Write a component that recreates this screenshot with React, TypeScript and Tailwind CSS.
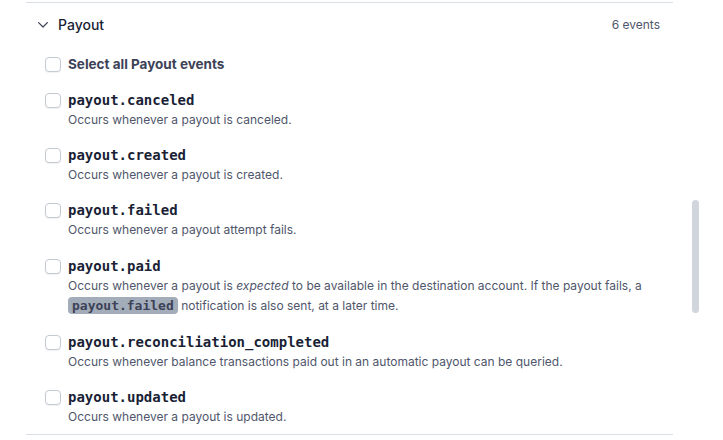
import { useState } from 'react';

type PayoutEvent = {
  name: string;
  description: React.ReactNode;
  tall?: boolean;
};

const EVENTS: PayoutEvent[] = [
  { name: 'payout.canceled', description: 'Occurs whenever a payout is canceled.' },
  { name: 'payout.created', description: 'Occurs whenever a payout is created.' },
  { name: 'payout.failed', description: 'Occurs whenever a payout attempt fails.' },
  {
    name: 'payout.paid',
    tall: true,
    description: (
      <>
        Occurs whenever a payout is <em>expected</em> to be available in the destination account. If the payout fails, a{' '}
        <code className="rounded-[4px] bg-[#a3acb9] px-[4px] py-[1px] font-['DejaVu_Sans_Mono',monospace] text-[13px] font-bold leading-[16px] text-[#3c4257]">
          payout.failed
        </code>{' '}
        notification is also sent, at a later time.
      </>
    ),
  },
  {
    name: 'payout.reconciliation_completed',
    description: 'Occurs whenever balance transactions paid out in an automatic payout can be queried.',
  },
  { name: 'payout.updated', description: 'Occurs whenever a payout is updated.' },
];

function Checkbox({ checked, onChange }: { checked: boolean; onChange: () => void }) {
  return (
    <button
      onClick={onChange}
      className={`mt-[2px] h-[15px] w-[16px] shrink-0 rounded-[4px] border shadow-[0_1px_1px_rgba(0,0,0,0.06)] ${
        checked ? 'border-[#635bff] bg-[#635bff]' : 'border-[#c4cad3] bg-white'
      }`}
    />
  );
}

export default function App() {
  const [selected, setSelected] = useState<Record<string, boolean>>({});
  const allSelected = EVENTS.every((e) => selected[e.name]);

  const toggle = (name: string) => setSelected((s) => ({ ...s, [name]: !s[name] }));
  const toggleAll = () => {
    const next: Record<string, boolean> = {};
    EVENTS.forEach((e) => (next[e.name] = !allSelected));
    setSelected(next);
  };

  return (
    <div className="flex h-[440px] w-[723px] overflow-hidden bg-white pt-[2px] font-['Inter',sans-serif]">
      <div className="ml-[26px] w-[647px] shrink-0">
        <div className="border-y border-[#d8dee4]">
          {/* Header */}
          <div className="flex h-[43px] items-center justify-between pl-[12px] pr-[13px]">
            <div className="flex items-center gap-[10px]">
              <svg width="10" height="6" viewBox="0 0 10 6" fill="none" className="mt-[1px]">
                <path d="M0.6 0.6 5 5 9.4 0.6" stroke="#3c4257" strokeWidth="1.2" strokeLinecap="round" strokeLinejoin="round" />
              </svg>
              <span className="text-[14px] font-medium text-[#1a1f36]">Payout</span>
            </div>
            <span className="text-[12px] text-[#4f566b]">6 events</span>
          </div>

          {/* Event list */}
          <div className="flex flex-col gap-[17px] pb-[8px] pl-[19px] pr-[20px] pt-[9px]">
            <label className="flex items-start gap-[7px]">
              <Checkbox checked={allSelected} onChange={toggleAll} />
              <span className="text-[13.5px] font-bold leading-[19px] text-[#3c4257]">Select all Payout events</span>
            </label>

            {EVENTS.map((event) => (
              <div key={event.name} className={`flex items-start gap-[7px] ${event.tall ? 'mt-[1px]' : ''}`}>
                <Checkbox checked={!!selected[event.name]} onChange={() => toggle(event.name)} />
                <div className="flex flex-col">
                  <span className="font-['DejaVu_Sans_Mono',monospace] text-[14px] font-bold leading-[19px] text-[#1a1f36]">
                    {event.name}
                  </span>
                  <p className={`text-[12px] text-[#4f566b] ${event.tall ? 'leading-[20px]' : 'leading-[19px]'}`}>
                    {event.description}
                  </p>
                </div>
              </div>
            ))}
          </div>
        </div>
      </div>

      {/* Scrollbar */}
      <div className="ml-[19px] pt-[198px]">
        <div className="h-[113px] w-[7px] rounded-full bg-[#d1d6dd]" />
      </div>
    </div>
  );
}
